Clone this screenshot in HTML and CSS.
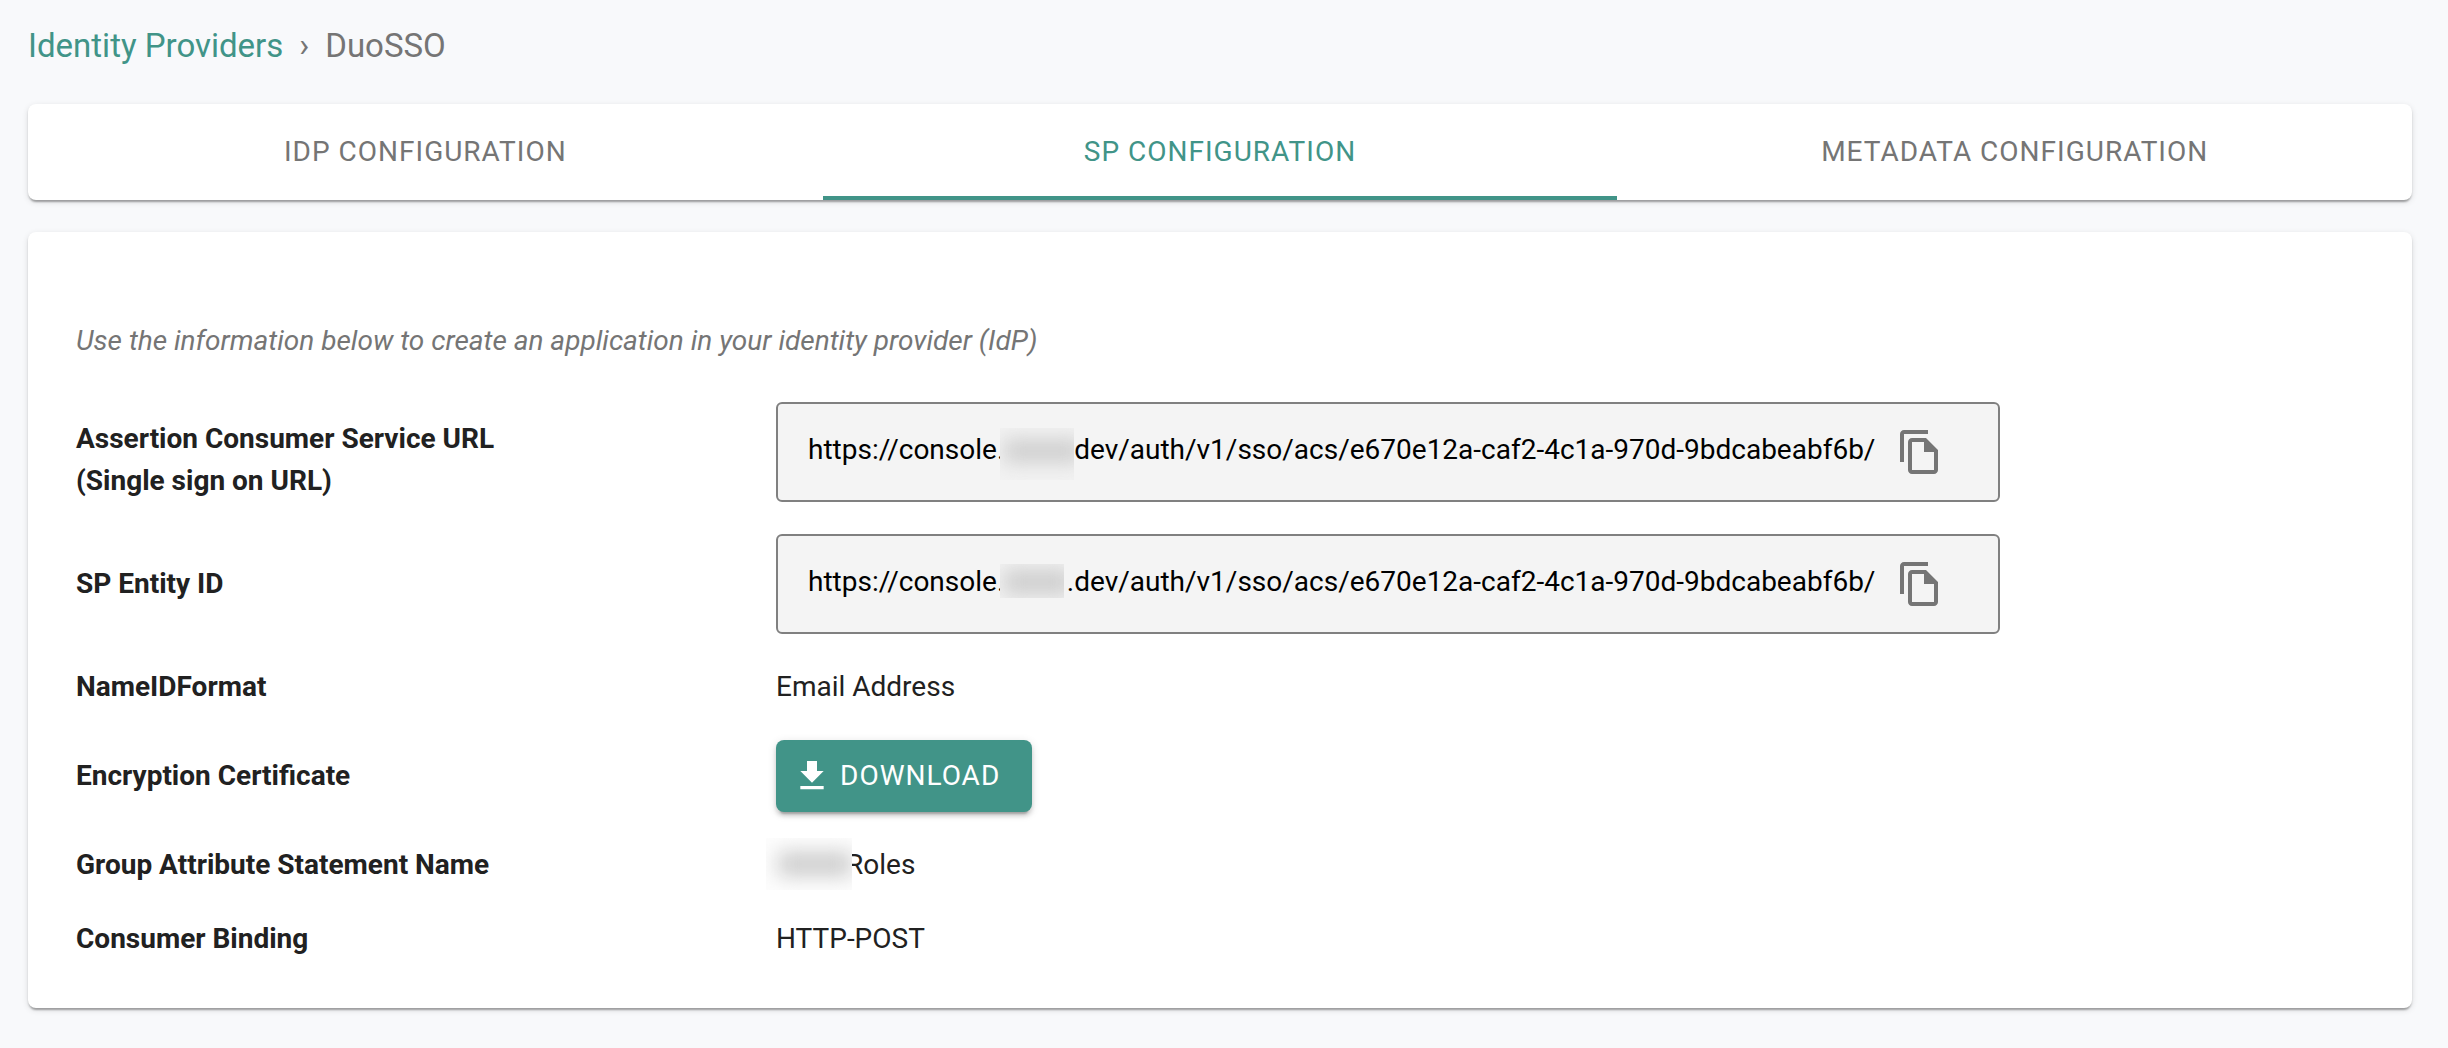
FILE: index.html
```html
<!DOCTYPE html>
<html lang="en">
<head>
  <meta charset="utf-8">
  <title>DuoSSO - Identity Providers</title>
  <link rel="stylesheet" href="styles.css">
</head>
<body>
  <nav class="breadcrumb">
    <a href="#">Identity Providers</a>
    <span>›</span>
    <span>DuoSSO</span>
  </nav>

  <div class="card tabs" role="tablist">
    <button class="tab" type="button" role="tab">IDP CONFIGURATION</button>
    <button class="tab active" type="button" role="tab" aria-selected="true">SP CONFIGURATION</button>
    <button class="tab" type="button" role="tab">METADATA CONFIGURATION</button>
  </div>

  <main class="card content">
    <p class="intro">Use the information below to create an application in your identity provider (IdP)</p>

    <div class="rows">
      <div class="row row-end">
        <label class="label" for="acsUrl">Assertion Consumer Service URL<br>(Single sign on URL)</label>
        <div class="field">
          <input id="acsUrl" type="text" readonly value="https://console.         .dev/auth/v1/sso/acs/e670e12a-caf2-4c1a-970d-9bdcabeabf6b/">
          <span class="smudge smudge-tall"></span>
          <button class="copy" type="button" aria-label="Copy">
            <svg viewBox="0 0 24 24"><path d="M16 1H4c-1.100 0-2 .9-2 2v14h2V3h12V1zm-1 4H8c-1.100 0-1.990.9-1.990 2L6 21c0 1.100.890 2 1.990 2H19c1.100 0 2-.9 2-2V11l-6-6zM8 21V7h6v5h5v9H8z"/></svg>
          </button>
        </div>
      </div>

      <div class="row">
        <label class="label" for="entityId">SP Entity ID</label>
        <div class="field">
          <input id="entityId" type="text" readonly value="https://console.         .dev/auth/v1/sso/acs/e670e12a-caf2-4c1a-970d-9bdcabeabf6b/">
          <span class="smudge smudge-short"></span>
          <button class="copy" type="button" aria-label="Copy">
            <svg viewBox="0 0 24 24"><path d="M16 1H4c-1.100 0-2 .9-2 2v14h2V3h12V1zm-1 4H8c-1.100 0-1.990.9-1.990 2L6 21c0 1.100.890 2 1.990 2H19c1.100 0 2-.9 2-2V11l-6-6zM8 21V7h6v5h5v9H8z"/></svg>
          </button>
        </div>
      </div>

      <div class="row">
        <div class="label">NameIDFormat</div>
        <div>Email Address</div>
      </div>

      <div class="row">
        <div class="label">Encryption Certificate</div>
        <div>
          <button class="download" type="button">
            <svg viewBox="0 0 24 24"><path d="M19 9h-4V3H9v6H5l7 7 7-7zM5 18v2h14v-2H5z"/></svg>
            DOWNLOAD
          </button>
        </div>
      </div>

      <div class="row">
        <div class="label">Group Attribute Statement Name</div>
        <div class="role-name">Roles<span class="smudge smudge-role"></span></div>
      </div>

      <div class="row">
        <div class="label">Consumer Binding</div>
        <div>HTTP-POST</div>
      </div>
    </div>
  </main>
</body>
</html>
```

FILE: styles.css
```css
* {
  box-sizing: border-box;
}

body {
  margin: 0;
  padding: 22px 36px 40px 28px;
  background-color: #f8f9fb;
  color: #212121;
  font-family: Roboto, sans-serif;
  font-size: 28px;
  line-height: 42px;
}

button,
input {
  font: inherit;
  border: none;
  padding: 0;
  background: none;
}

button {
  cursor: pointer;
}

.breadcrumb {
  display: flex;
  gap: 16px;
  margin-bottom: 34px;
  color: #757575;
  font-size: 33px;
  line-height: 48px;
}

.breadcrumb a {
  color: #419488;
  text-decoration: none;
}

.card {
  background-color: #fff;
  border-radius: 8px;
  box-shadow: 0 4px 2px -2px rgba(0, 0, 0, 0.2),
    0 2px 2px 0 rgba(0, 0, 0, 0.14),
    0 2px 6px 0 rgba(0, 0, 0, 0.12);
}

.tabs {
  display: flex;
  margin-bottom: 32px;
}

.tab {
  flex: 1;
  height: 96px;
  border-top: 4px solid transparent;
  border-bottom: 4px solid transparent;
  color: #757575;
  letter-spacing: 1px;
}

.tab.active {
  color: #419488;
  border-bottom-color: #419488;
}

.content {
  padding: 88px 48px 48px;
}

.intro {
  margin: 0 0 40px;
  color: #757575;
  font-style: italic;
}

.rows {
  display: flex;
  flex-direction: column;
  gap: 32px;
}

.row {
  display: grid;
  grid-template-columns: 700px minmax(0, 1224px);
  align-items: center;
}

.row-end {
  align-items: end;
}

.label {
  font-weight: bold;
}

.field {
  position: relative;
  display: flex;
  align-items: center;
  height: 100px;
  padding: 0 30px;
  border: 2px solid #808080;
  border-radius: 6px;
  background-color: #f4f4f4;
}

.field input {
  flex: 1;
  min-width: 0;
  padding-bottom: 4px;
  color: #000;
  outline: none;
}

.copy {
  display: flex;
  padding: 24px 24px 24px 16px;
}

.copy svg {
  width: 48px;
  height: 48px;
  fill: #757575;
}

/* blurred patch over the private part of a value */
.smudge {
  position: absolute;
  overflow: hidden;
  background-color: #f2f2f2;
}

.smudge::before {
  content: "";
  position: absolute;
  inset: 12px -8px 18px 4px;
  background-color: #cccccc;
  filter: blur(10px);
}

.smudge-tall {
  left: 222px;
  top: 24px;
  width: 74px;
  height: 52px;
}

.smudge-short {
  left: 222px;
  top: 28px;
  width: 64px;
  height: 34px;
}

.smudge-short::before {
  inset: 6px -8px 4px 4px;
}

.role-name {
  position: relative;
  padding-left: 70px;
}

.smudge-role {
  left: -10px;
  top: -6px;
  width: 86px;
  height: 52px;
  background-color: #fdfdfd;
}

.smudge-role::before {
  inset: 14px 0 14px 12px;
}

.download {
  display: flex;
  align-items: center;
  gap: 8px;
  height: 72px;
  padding: 0 32px 0 16px;
  border-radius: 8px;
  background-color: #419488;
  color: #fff;
  letter-spacing: 1px;
  box-shadow: 0 6px 2px -4px rgba(0, 0, 0, 0.2),
    0 4px 4px 0 rgba(0, 0, 0, 0.14),
    0 2px 10px 0 rgba(0, 0, 0, 0.12);
}

.download svg {
  width: 40px;
  height: 40px;
  fill: #fff;
}
```
